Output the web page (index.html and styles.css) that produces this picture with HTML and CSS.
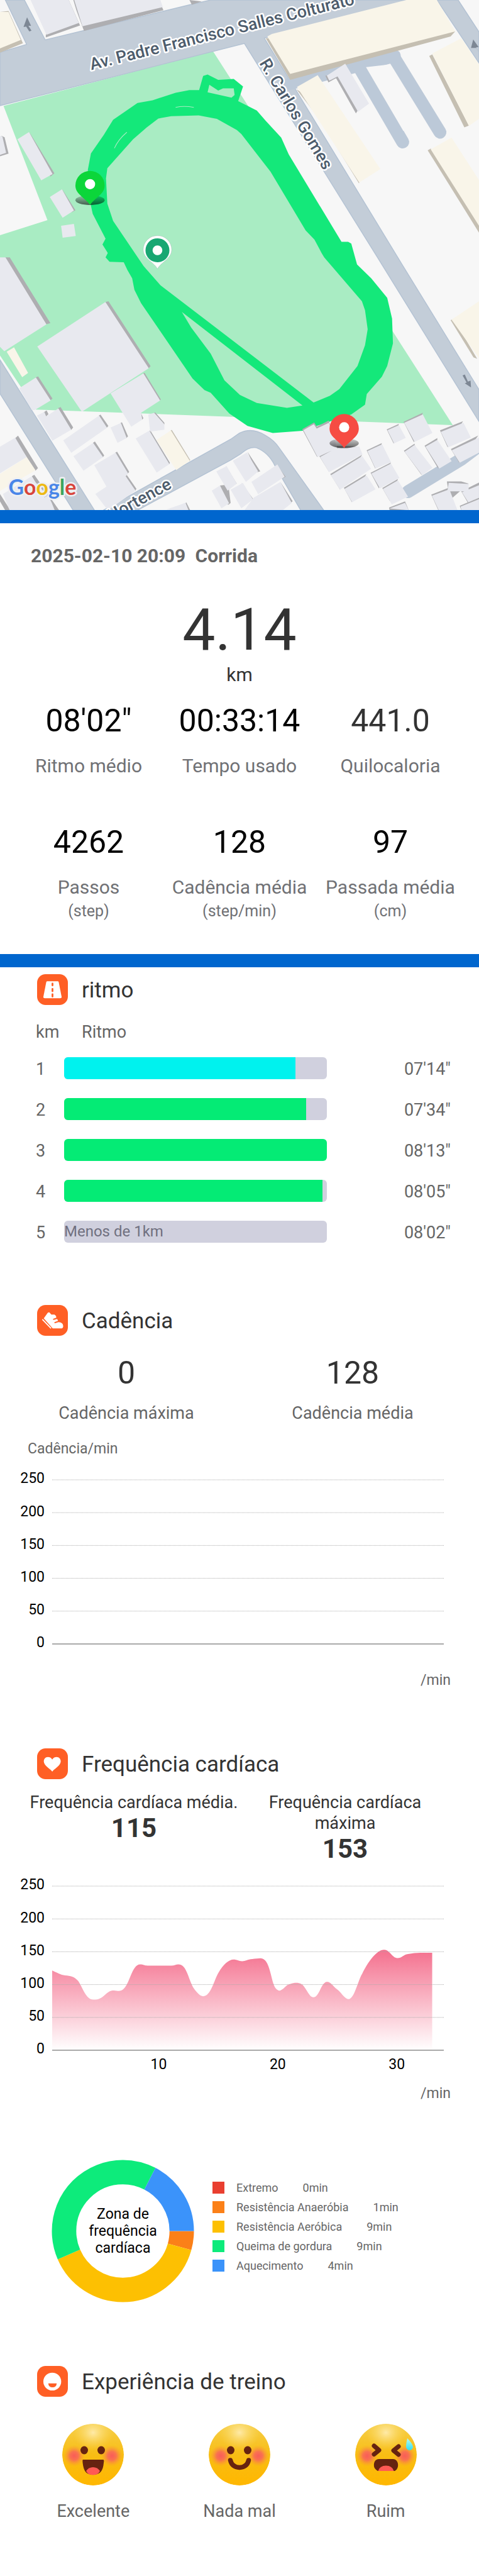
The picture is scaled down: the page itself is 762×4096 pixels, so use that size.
FILE: index.html
```html
<!DOCTYPE html>
<html lang="pt-BR">
<head>
<meta charset="utf-8">
<meta name="viewport" content="width=device-width, initial-scale=1">
<title>Corrida 2025-02-10</title>
<link rel="stylesheet" href="styles.css">
</head>
<body>
<main class="page">
<svg class="map" viewBox="0 0 1080 1150" role="img" aria-label="Mapa do percurso">
  <defs>
    <linearGradient id="pinShadow" x1="0" y1="0" x2="0" y2="1"><stop offset="0" stop-color="#000" stop-opacity=".15"/><stop offset="1" stop-color="#000" stop-opacity=".6"/></linearGradient>
    <g id="pin"><ellipse cx="0" cy="-11" rx="33" ry="11" fill="url(#pinShadow)"/><path d="M0 0C-10 -16 -33 -24 -33 -44A33 33 0 0 1 33 -44C33 -24 10 -16 0 0Z"/><circle cx="0" cy="-47" r="11.500" fill="#fff"/></g>
  </defs>
  <rect width="1080" height="1150" fill="#f7f7f7"/>
  <path class="park" d="M480 115L1021 958L81 923L0 801V530L107 496L8 239Z"/>
  <g class="road">
    <path d="M0 118L60 100L12 0H55L102 90L427 11L475 0H925L596 86L909 600L1080 878V950L851 580L551 98L0 238Z"/>
    <path d="M985 0H1033L1080 72V142Z"/>
    <path d="M0 811L213 1150H165L0 887Z"/>
    <path d="M233 1150L520 990L540 976Q568 962 598 981Q618 992 630 1010L730 1150H678L620 1050Q606 1020 578 1009Q562 1006 544 1022L520 1037L310 1150Z"/>
  </g>
  <g class="lane">
    <path d="M655 188L800 150L889 126" /><path d="M809 150L908 320"/><path d="M885 124L992 298"/>
    <path d="M920 1108L1040 1035L1080 1005"/>
  </g>
  <g transform="scale(.6888 .3827)">
    <path class="shade" d="M225 0L262 150L150 220L150 205ZM240 0L250 60L275 182L535 60L520 0ZM620 0L628 28L660 8Z"/>
    <path class="house" d="M100 0H225L258 135L152 205ZM243 0H525L533 42L270 155Z"/>
    <path class="cream-shade" d="M0 70L28 65L75 255L0 310Z"/><path class="cream" d="M0 70L28 70L68 235L0 285Z"/>
    <path class="cream-shade" d="M870 225L950 470L1475 215L1490 185Z"/>
    <path class="cream" d="M875 215L890 200L1330 0H1430L1490 185L950 435Z"/>
    <path class="cream-shade" d="M970 525L1045 700L1175 1080L1180 1060L1000 560ZM1405 330L1520 750L1535 740L1415 320ZM1400 885L1568 1370V1310L1410 875Z"/>
    <path class="cream" d="M972 512L1040 443L1245 995L1176 1075ZM1415 315L1510 225L1568 380V700L1535 742ZM1410 880L1478 810L1568 1060V1330Z"/>
    <path class="shade" d="M1065 445L1075 485L1100 460L1165 668L1175 640L1105 440ZM95 775L178 1020L165 1040ZM203 1113L247 1238L235 1250ZM5 800L15 808L28 905L0 920Z"/>
    <path class="house" d="M1070 445L1130 375L1208 610L1172 658L1105 450L1078 475ZM57 820L95 778L172 1025L135 1062ZM163 1160L203 1115L242 1240L205 1282ZM200 1330L242 1318L248 1390L205 1400ZM0 800L8 805L20 900L0 912Z"/>
    <path class="white" d="M1198 395L1275 380L1400 770L1320 770Z"/>
  </g>
  <g transform="translate(0 580) scale(.6888 .3954)">
    <path class="shade" d="M15 0H32L165 375L150 382ZM345 255L355 250L493 620L485 635Z"/>
    <path class="house" d="M0 0H18L152 382L14 535L0 510ZM122 508L345 255L487 632L360 775L268 880Z"/>
    <path class="cream-shade" d="M1475 358L1550 570L1562 578L1485 350Z"/><path class="cream" d="M1478 355L1568 250V575Z"/>
    <path class="shade" d="M740 1190L755 1400L748 1410L720 1300L775 1290ZM810 1108L852 1220L840 1225ZM905 1180L935 1250L925 1260ZM918 1280L958 1390L950 1402ZM790 1285L830 1380L820 1385ZM720 1300L755 1400L745 1410Z"/>
    <path class="house" d="M762 1160L808 1112L845 1220L805 1280ZM708 1220L742 1190L775 1290L745 1330ZM823 1280L908 1180L932 1250L845 1350ZM693 1330L720 1300L750 1402L725 1430ZM755 1325L795 1285L828 1380L790 1430ZM830 1370L918 1280L955 1400L925 1442H800ZM550 1442L605 1400L620 1442Z"/>
  </g>
  <g transform="translate(0 780) scale(.3333)">
    <path class="shade" d="M240 212L258 205L355 355L340 368ZM968 185L978 180L1088 360L1080 370ZM392 420L410 412L495 550L480 568ZM292 450L315 435L328 460L310 477ZM668 470L680 463L733 540L722 552ZM815 520L825 515L866 610L855 622ZM628 655L642 645L705 740L695 752ZM780 720L792 714L874 850L865 862ZM847 878L857 870L923 965L915 978ZM100 625L122 606L257 825L240 843ZM215 880L232 870L400 1110H350ZM943 460L953 452L970 488L962 497ZM1042 452L1050 448L1112 518V530ZM1008 578L1016 568L1150 790L1143 800ZM0 1000L70 1110H35L0 1050ZM1252 1065L1260 1056L1287 1110H1270Z"/>
    <path class="cream-shade" d="M1153 572L1162 566L1287 770L1280 780Z"/>
    <path class="cream" d="M45 38L95 8L190 182L150 210ZM1058 635L1156 570L1284 776L1192 838ZM0 865L180 750L240 840L0 980Z"/>
    <path class="house" d="M130 285L243 212L343 368L235 432H215ZM748 320L970 185L1083 368L955 450L962 497L888 545ZM250 470L300 445L312 475L395 422L482 565L355 640ZM428 638L670 470L724 552L482 722ZM748 550L818 520L857 622L795 655ZM497 745L630 655L697 750L565 843ZM638 805L782 720L867 862L850 880L917 978L730 1110L645 1000L720 950ZM0 680L103 620L180 750L0 860ZM1003 462L1043 452L1112 530V565L1015 578ZM918 625L1010 572L1146 798L1060 855ZM20 1000L215 880L240 920L320 1010L150 1110H65ZM150 1105L325 1010L350 1060L370 1110H150ZM1125 1105L1255 1060L1275 1110Z"/>
  </g>
  <path class="track" fill-rule="evenodd" d="M427 203L396 209L344 226L310 232L255 270L234 304L205 346L198 383L205 463L209 482L238 538L231 551L243 570L238 580L247 590L279 591L287 608L298 627L303 653L318 683L434 853L461 879L475 885L517 932L558 960L615 976L682 971L744 950L792 934L823 912L827 888L861 849L873 825L886 774L884 718L873 671L837 627L805 596L792 549L785 545L770 545L651 348L634 310L599 272L579 249L537 228L548 195L527 178L492 180L468 168L458 171L449 203Z
    M472 191L492 204L503 199L527 199L529 214L522 220L468 208Z
    M448 260L386 262L357 267L331 287L300 314L242 379L239 402L242 459L255 498L324 600L362 643L707 907L744 892L765 877L806 825L823 778L829 742L823 699L816 679L731 580L725 570L709 540L689 519L610 387L544 302L534 293L489 268Z
    M410 703L682 914L647 919L579 908L541 890L506 857L475 797L431 738Z"/>
  <path d="M396 242Q415 238 437 242M258 334Q266 315 286 298" fill="none" stroke="#a9ecc3" stroke-width="1.500"/>
  <g transform="translate(660 880) scale(.3333)">
    <path class="shade" d="M64 262L145 216L163 244L243 204L260 250L165 450ZM180 444L300 375L445 380L245 550ZM254 565L470 434L320 670ZM346 658L498 565L400 755ZM500 404L603 356L558 528ZM527 556L665 486L583 662ZM606 660L712 598L658 750ZM636 263L718 226L683 360ZM750 212L880 150L820 350ZM752 408L824 360L873 574ZM892 374L978 322L985 530ZM996 270L1152 208L1048 384ZM1070 396L1255 305L1126 488ZM937 704L1050 660L1043 615H1140L1190 630L985 810ZM1140 682L1260 622V720L1185 760ZM1130 780L1260 725V810H1140ZM652 792L760 750L785 810H655Z"/>
    <path class="house" d="M72 268L143 228L162 258L245 218L275 300L300 390L168 450ZM185 450L290 392L450 378L472 432L245 552ZM258 574L470 444L530 530L320 670ZM350 666L500 575L560 668L402 755ZM505 410L605 364L665 484L560 528ZM532 562L665 494L722 592L590 662ZM610 666L712 608L780 718L670 770ZM641 268L718 234L765 320L686 358ZM754 218L880 162L945 288L825 348ZM757 414L824 368L945 522L876 574ZM898 380L978 334L1075 478L992 528ZM1002 280L1155 218L1205 318L1052 384ZM1076 404L1260 318V420L1130 488ZM942 712L1048 672L1055 625L1190 632V682H1065L1115 810H988ZM1145 688L1260 640V725L1188 756ZM1136 785L1260 735V810H1140ZM656 798L760 760L785 810Z"/>
  </g>
  <g fill="#7d8794">
    <path d="M61 39L70 58L64 58L71 69L66 71L59 60L53 61Z"/><path d="M1067 89L1079 106L1073 107L1080 118L1074 108L1062 108Z"/><path d="M1043 846L1048 844L1055 860L1061 858L1062 873L1048 864L1052 862Z"/>
  </g>
  <g class="street">
    <text transform="translate(206 158) rotate(-14)">Av. Padre Francisco Salles Colturato</text>
    <text transform="translate(584 142) rotate(59)">R. Carlos Gomes</text>
    <text text-anchor="end" transform="translate(389 1099) rotate(-29)">Hortence</text>
  </g>
  <use href="#pin" x="203" y="462" fill="#0cd63a"/>
  <use href="#pin" x="776" y="1010" fill="#f64c43"/>
  <path d="M355 606C349 592 323 583 323 563A32 32 0 0 1 387 563C387 583 361 592 355 606Z" fill="#fff" stroke="#889" stroke-opacity=".4"/><circle cx="355" cy="564" r="27" fill="#18a772"/><circle cx="355" cy="564" r="11" fill="#fff"/>
  <text class="google" x="19" y="1116"><tspan fill="#4a86e8">G</tspan><tspan fill="#d8453b">o</tspan><tspan fill="#edb913">o</tspan><tspan fill="#4a86e8">g</tspan><tspan fill="#3ba55a">l</tspan><tspan fill="#d8453b">e</tspan></text>
</svg>

<section class="summary">
  <h1 class="date">2025-02-10 20:09 <span class="sport">Corrida</span></h1>
  <div class="distance">4.14</div>
  <div class="unit">km</div>
  <div class="stats">
    <div class="stat"><div class="value black">08'02"</div><div class="label">Ritmo médio</div></div>
    <div class="stat"><div class="value black">00:33:14</div><div class="label">Tempo usado</div></div>
    <div class="stat"><div class="value">441.0</div><div class="label">Quilocaloria</div></div>
    <div class="stat"><div class="value black">4262</div><div class="label">Passos</div><div class="sub">(step)</div></div>
    <div class="stat"><div class="value black">128</div><div class="label">Cadência média</div><div class="sub">(step/min)</div></div>
    <div class="stat"><div class="value black">97</div><div class="label">Passada média</div><div class="sub">(cm)</div></div>
  </div>
</section>

<section class="pace">
  <header class="heading">
    <svg class="icon" viewBox="0 0 69 69" aria-hidden="true"><rect width="69" height="69" rx="19"/><path class="w" d="M23 16H46Q48 16 48.500 18L55 51Q55 54 52 54H17Q14 54 14 51L20.500 18Q21 16 23 16Z"/><path d="M34.500 21V25M34.500 33V38M34.500 45V50" stroke="#ff5f25" stroke-width="4" stroke-linecap="round"/></svg>
    <h2 class="title">ritmo</h2>
  </header>
  <table class="laps">
    <thead><tr><th class="num" scope="col">km</th><th class="pace-head" scope="col">Ritmo</th><th class="time"></th></tr></thead>
    <tbody>
      <tr><td class="num">1</td><td><div class="bar"><div class="fill cyan" style="width:88.1%"></div></div></td><td class="time">07'14"</td></tr>
      <tr><td class="num">2</td><td><div class="bar"><div class="fill" style="width:92.2%"></div></div></td><td class="time">07'34"</td></tr>
      <tr><td class="num">3</td><td><div class="bar"><div class="fill" style="width:100%"></div></div></td><td class="time">08'13"</td></tr>
      <tr><td class="num">4</td><td><div class="bar"><div class="fill" style="width:98.4%"></div></div></td><td class="time">08'05"</td></tr>
      <tr><td class="num">5</td><td><div class="bar">Menos de 1km</div></td><td class="time">08'02"</td></tr>
    </tbody>
  </table>
</section>

<section class="cadence">
  <header class="heading">
    <svg class="icon" viewBox="0 0 69 69" aria-hidden="true"><rect width="69" height="69" rx="19"/><path class="w" d="M15 30L23.500 18Q25 16 27.500 16.700L32 21.500H39L42.500 24.500L43 28.500L36 31Q35 33 37 33.500L45 31.500L47 35.500L39 38.500Q38 41 40 41L48 38.500Q58 39 58.500 47Q58.500 52.500 53 52.500H35Z"/><path d="M12.500 33L30.500 51.500" stroke="#fff" stroke-width="2.500" stroke-linecap="round"/></svg>
    <h2 class="title">Cadência</h2>
  </header>
  <div class="pair">
    <div class="stat"><div class="value">0</div><div class="label small">Cadência máxima</div></div>
    <div class="stat"><div class="value">128</div><div class="label small">Cadência média</div></div>
  </div>
  <div class="axis-title">Cadência/min</div>
  <div class="chart">
    <div class="y-axis"><span>250</span><span>200</span><span>150</span><span>100</span><span>50</span><span>0</span></div>
    <div class="plot-area">
      <svg class="plot" viewBox="170 645 1282 675" preserveAspectRatio="none" aria-hidden="true">
        <path class="grid" d="M170 645H1452M170 780H1452M170 915H1452M170 1050H1452M170 1185H1452"/><path class="base" d="M170 1320H1452"/>
      </svg>
    </div>
  </div>
  <div class="per-min">/min</div>
</section>

<section class="heart">
  <header class="heading">
    <svg class="icon" viewBox="0 0 69 69" aria-hidden="true"><rect width="69" height="69" rx="19"/><path class="w" d="M34 52C30 46 15 39 15 29C15 18 29 16 34 25C39 16 53 18 53 29C53 39 38 46 34 52Z"/></svg>
    <h2 class="title">Frequência cardíaca</h2>
  </header>
  <div class="rates">
    <div class="rate"><div class="rate-label">Frequência cardíaca média.</div><div class="rate-value">115</div></div>
    <div class="rate"><div class="rate-label">Frequência cardíaca<br>máxima</div><div class="rate-value">153</div></div>
  </div>
  <div class="chart">
    <div class="y-axis"><span>250</span><span>200</span><span>150</span><span>100</span><span>50</span><span>0</span></div>
    <div class="plot-area">
      <svg class="plot" viewBox="170 645 1282 675" preserveAspectRatio="none" role="img" aria-label="Frequência cardíaca por minuto">
        <defs><linearGradient id="hr" gradientUnits="userSpaceOnUse" x1="0" y1="907" x2="0" y2="1320"><stop offset="0" stop-color="#f4708e"/><stop offset="1" stop-color="#fff"/></linearGradient></defs>
        <path fill="url(#hr)" d="M170 992C185 1000 198 1010 212 1012C230 1014 242 1016 255 1035C270 1062 280 1112 305 1112C322 1112 330 1108 345 1090C355 1078 362 1074 372 1074C382 1074 390 1080 400 1072C425 1050 430 967 458 967C468 967 472 972 482 972H560C570 972 575 967 583 967C612 967 615 1030 635 1068C645 1085 655 1098 664 1098C690 1098 700 1030 715 1000C730 968 748 947 764 947C775 947 780 954 792 954C802 954 810 946 825 945C835 944 845 942 852 942C885 942 885 1040 902 1066C908 1074 912 1076 917 1074C930 1068 935 1050 950 1047C962 1042 975 1041 985 1047C1002 1060 1010 1102 1025 1102C1045 1102 1050 1039 1070 1039C1082 1039 1090 1058 1103 1070C1118 1085 1128 1110 1140 1110C1160 1108 1170 1035 1185 1005C1205 955 1232 907 1257 907C1275 907 1283 941 1300 941C1315 941 1320 926 1335 924C1350 921 1362 919 1375 919H1414V1320H170Z"/>
        <path class="grid" d="M170 645H1452M170 780H1452M170 915H1452M170 1050H1452M170 1185H1452"/><path class="base" d="M170 1320H1452"/>
      </svg>
      <div class="x-axis"><i></i><span>10</span><span>20</span><span>30</span></div>
    </div>
  </div>
  <div class="per-min near">/min</div>

  <div class="zones">
    <div class="donut">
      <svg class="ring" viewBox="-114 -114 228 228" aria-hidden="true">
        <g fill="none" stroke-width="39">
          <circle r="94" pathLength="23" stroke="#fb8018" stroke-dasharray="1 22"/>
          <circle r="94" pathLength="23" stroke="#fdc002" stroke-dasharray="9 14" stroke-dashoffset="-1"/>
          <circle r="94" pathLength="23" stroke="#0deb7b" stroke-dasharray="9 14" stroke-dashoffset="-10"/>
          <circle r="94" pathLength="23" stroke="#3b93fa" stroke-dasharray="4 19" stroke-dashoffset="-19"/>
        </g>
      </svg>
      <div class="ring-text">Zona de<br>frequência<br>cardíaca</div>
    </div>
    <ul class="legend">
      <li><i class="swatch red"></i><span>Extremo</span><span class="mins">0min</span></li>
      <li><i class="swatch orange"></i><span>Resistência Anaeróbia</span><span class="mins">1min</span></li>
      <li><i class="swatch yellow"></i><span>Resistência Aeróbica</span><span class="mins">9min</span></li>
      <li><i class="swatch green"></i><span>Queima de gordura</span><span class="mins">9min</span></li>
      <li><i class="swatch blue"></i><span>Aquecimento</span><span class="mins">4min</span></li>
    </ul>
  </div>
</section>

<section class="experience">
  <header class="heading">
    <svg class="icon" viewBox="0 0 69 69" aria-hidden="true"><rect width="69" height="69" rx="19"/><circle class="w" cx="34" cy="35" r="20"/><path d="M25 39H44Q43 48 34.500 48Q26 48 25 39Z"/></svg>
    <h2 class="title">Experiência de treino</h2>
  </header>
  <svg class="defs" width="0" height="0" aria-hidden="true"><defs>
    <linearGradient id="skin" x1="0" y1="0" x2="0" y2="1"><stop offset="0" stop-color="#f6cf4a"/><stop offset=".5" stop-color="#f8bd14"/><stop offset="1" stop-color="#ffb700"/></linearGradient>
    <radialGradient id="shine"><stop offset="0" stop-color="#ffeaa8"/><stop offset="1" stop-color="#fbd85c" stop-opacity="0"/></radialGradient>
    <radialGradient id="blush"><stop offset="0" stop-color="#f95c58"/><stop offset=".4" stop-color="#f9655a" stop-opacity=".85"/><stop offset="1" stop-color="#fa9a30" stop-opacity="0"/></radialGradient>
    <linearGradient id="drop" x1="0" y1="0" x2="0" y2="1"><stop offset="0" stop-color="#b8fbf2"/><stop offset="1" stop-color="#30dff5"/></linearGradient>
    <clipPath id="disc"><circle cx="49" cy="49" r="49"/></clipPath>
    <g id="face" clip-path="url(#disc)"><circle cx="49" cy="49" r="49" fill="url(#skin)"/><ellipse cx="49" cy="14" rx="32" ry="28" fill="url(#shine)"/><circle cx="19" cy="51" r="17" fill="url(#blush)"/><circle cx="79" cy="51" r="17" fill="url(#blush)"/></g>
  </defs></svg>
  <div class="moods">
    <button class="mood" type="button">
      <svg class="emoji" viewBox="0 0 98 98" aria-hidden="true"><use href="#face"/><g fill="#662310"><ellipse cx="35" cy="42" rx="6" ry="6.500"/><ellipse cx="62" cy="42" rx="6" ry="6.500"/><path d="M33 57H65Q67 57 66 62C65 75 60 81 49 81C38 81 34 75 32.500 62Q32 57 33 57Z"/></g><path d="M38 75Q42 69 49 69Q56 69 60 75Q57 81.500 49 81.500Q41 81.500 38 75Z" fill="#ff5a54"/></svg>
      Excelente
    </button>
    <button class="mood" type="button">
      <svg class="emoji" viewBox="0 0 98 98" aria-hidden="true"><use href="#face"/><g fill="#662310"><ellipse cx="35" cy="42" rx="6" ry="6.500"/><ellipse cx="62" cy="42" rx="6" ry="6.500"/></g><path d="M34.500 58Q37 69 49 69.500Q61 69 63.500 58" fill="none" stroke="#662310" stroke-width="7.500" stroke-linecap="round"/></svg>
      Nada mal
    </button>
    <button class="mood" type="button">
      <svg class="emoji" viewBox="0 0 98 98" aria-hidden="true"><use href="#face"/><path d="M30 35L38 42L30 48.500M69 36L61 42.500L69 49" fill="none" stroke="#662310" stroke-width="7" stroke-linecap="round" stroke-linejoin="round"/><path d="M38 56H60C66 56 69 62 68 68Q67 73 63 75H36Q31 72 30 68C29 61 32 56 38 56Z" fill="#662310"/><path d="M36.500 75Q39 66.500 49 66.500Q59 66.500 61.500 75Z" fill="#ff5a54"/><path d="M83 23Q92 32 92 37Q91 42 86 42Q81 41 81 36Q81 31 83 23Z" fill="url(#drop)"/></svg>
      Ruim
    </button>
  </div>
</section>
</main>
</body>
</html>
```
FILE: styles.css
```css
* { box-sizing: border-box; }
body { margin: 0; background: #fff; color: #333; font-family: Roboto, "Liberation Sans", sans-serif; }
h1, h2, ul { margin: 0; padding: 0; font-weight: 400; }
.page { width: 100%; }

.map { display: block; width: 100%; height: auto; }
.park { fill: #a9ecc3; }
.road { fill: #c3cdd8; stroke: #b3c2d3; stroke-width: 2; }
.lane { fill: none; stroke: #bcc9d8; stroke-width: 29; stroke-linecap: round; }
.house { fill: #e8e9ef; }
.shade { fill: #aeaeb1; }
.cream { fill: #f9f5e9; }
.cream-shade { fill: #c5bfb2; }
.white { fill: #f7f7f7; }
.track { fill: #14e87a; }
.street { fill: #4d5c6c; font-size: 38px; font-weight: 500; stroke: #fff; stroke-width: 7; stroke-linejoin: round; paint-order: stroke; }
.google { font-family: Lato, sans-serif; font-size: 48px; font-weight: 700; stroke: #eef0f2; stroke-width: 7; stroke-linejoin: round; paint-order: stroke; }

.summary { padding: 34px 21px 53px; border-top: 21px solid #0066ce; border-bottom: 21px solid #0066ce; text-align: center; }
.date { padding-left: 28px; font-size: 30px; line-height: 36px; font-weight: 700; color: #666; text-align: left; }
.sport { padding-left: 8px; }
.distance { margin-top: 47px; font-size: 93px; line-height: 106px; }
.unit { font-size: 30px; line-height: 36px; }
.stats { display: grid; grid-template-columns: repeat(3, 1fr); row-gap: 73px; margin-top: 25px; }
.stat { text-align: center; white-space: nowrap; }
.value { font-size: 50px; line-height: 60px; }
.black { color: #000; }
.label { margin-top: 24px; font-size: 30px; line-height: 36px; color: #707175; }
.label.small { margin-top: 18px; font-size: 27px; line-height: 32px; color: #666; }
.sub { margin-top: 5px; font-size: 25px; line-height: 30px; color: #707175; }

.heading { display: flex; align-items: center; gap: 22px; padding-left: 59px; }
.icon { width: 49px; height: 49px; fill: #ff5f25; }
.icon .w { fill: #fff; }
.title { padding-top: 2px; font-size: 35px; line-height: 40px; }

.pace { padding-top: 11px; }
.laps { width: 100%; margin-top: 27px; border-collapse: collapse; table-layout: fixed; font-size: 27px; line-height: 32px; color: #666; }
.laps th { padding: 0 0 9px; font-weight: 400; text-align: left; }
.laps td { height: 65px; padding: 0; }
.laps .num { width: 102px; padding-left: 57px; }
.laps .pace-head { padding-left: 28px; }
.laps .time { width: 242px; padding-right: 45px; text-align: right; }
.laps td.num, .laps td.time { padding-top: 2px; }
.bar { height: 35px; border-radius: 6px; overflow: hidden; background: #d0d0de; font-size: 24px; line-height: 35px; color: #707080; }
.fill { height: 100%; background: #04eb75; }
.fill.cyan { background: #00f2ee; }

.cadence { padding-top: 84px; }
.pair { display: grid; grid-template-columns: 1fr 1fr; margin-top: 29px; padding: 0 21px; }
.axis-title { margin: 27px 0 19px 44px; font-size: 23px; line-height: 28px; color: #666; }
.chart { display: flex; gap: 12px; padding-right: 56px; }
.y-axis { display: flex; flex-direction: column; justify-content: space-between; width: 71px; height: 289px; font-size: 23px; line-height: 28px; color: #000; text-align: right; }
.plot-area { flex: 1; padding-top: 16px; }
.plot { display: block; width: 100%; height: 261px; overflow: visible; }
.grid, .base { fill: none; vector-effect: non-scaling-stroke; stroke: #aaa; stroke-width: 1px; }
.grid { stroke-dasharray: 1 1; }
.base { stroke-width: 2px; }
.x-axis { display: grid; grid-template-columns: 12% 30.4% 30.4% 30.4%; padding-top: 9px; font-size: 23px; line-height: 28px; color: #000; text-align: center; }
.per-min { margin-top: 32px; padding-right: 45px; font-size: 23px; line-height: 28px; color: #666; text-align: right; }
.per-min.near { margin-top: 18px; }

.heart { padding-top: 94px; }
.rates { display: grid; grid-template-columns: 1fr 1fr; margin: 21px 0 19px; padding: 0 45px; text-align: center; }
.rate-label { font-size: 27px; line-height: 33px; white-space: nowrap; }
.rate-value { font-size: 42px; line-height: 48px; font-weight: 700; }

.zones { display: flex; align-items: center; gap: 29px; margin-top: 91px; padding-left: 82px; }
.donut { display: grid; place-items: center; width: 227px; }
.ring, .ring-text { grid-area: 1 / 1; }
.ring { display: block; width: 100%; }
.ring-text { font-size: 23px; line-height: 27px; color: #000; text-align: center; }
.legend { display: flex; flex-direction: column; gap: 11px; padding-bottom: 14px; list-style: none; font-size: 18px; line-height: 20px; color: #666; }
.legend li { display: flex; align-items: center; }
.swatch { width: 19px; height: 19px; margin-right: 19px; }
.mins { margin-left: 39px; }
.red { background: #e93f30; }
.orange { background: #fb8018; }
.yellow { background: #fdc002; }
.green { background: #0deb7b; }
.blue { background: #3b93fa; }

.experience { padding: 101px 0 85px; }
.defs { display: block; }
.moods { display: grid; grid-template-columns: repeat(3, 1fr); margin-top: 43px; padding: 0 32px; }
.mood { display: flex; flex-direction: column; align-items: center; gap: 25px; padding: 0; border: 0; background: none; font: 27px/32px Roboto, "Liberation Sans", sans-serif; color: #666; }
.emoji { width: 98px; height: 98px; }
```
